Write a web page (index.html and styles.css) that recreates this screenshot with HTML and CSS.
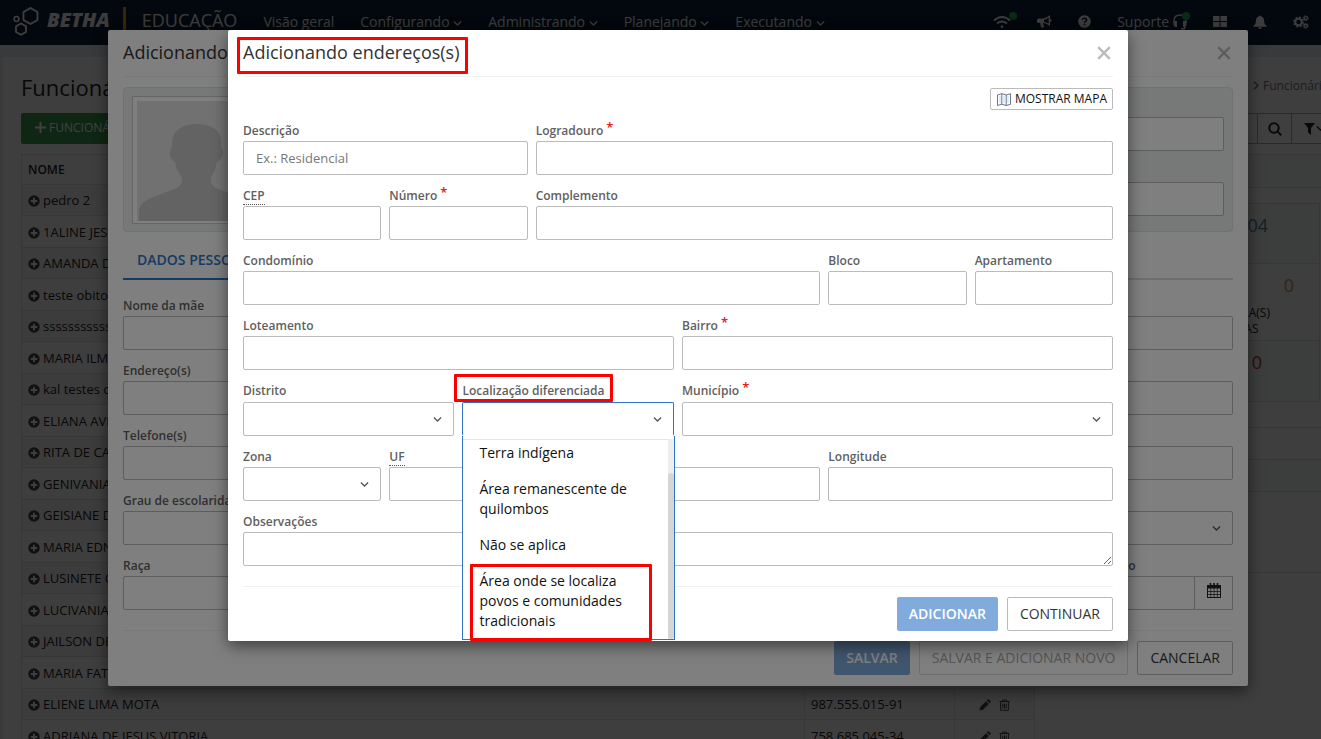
FILE: index.html
```html
<!DOCTYPE html>
<html lang="pt-BR">
<head>
<meta charset="utf-8">
<title>Betha Educação - Funcionários</title>
<link rel="stylesheet" href="styles.css">
</head>
<body>
<svg class="sprite" aria-hidden="true">
  <symbol id="i-chevron" viewBox="0 0 10 7"><path d="M1 1.2 5 5.2 9 1.2" fill="none" stroke="currentColor" stroke-width="1.4"/></symbol>
  <symbol id="i-plus-circle" viewBox="0 0 12 12"><circle cx="6" cy="6" r="5.7" fill="currentColor"/><path d="M6 2.8v6.4M2.8 6h6.4" stroke="#fff" stroke-width="1.8"/></symbol>
  <symbol id="i-pencil" viewBox="0 0 12 12"><path d="M.5 11.5 1.3 8 7 2.2l2.8 2.8L4 10.7zM7.8 1.4 8.7.5q.6-.5 1.2 0l1.6 1.6q.5.6 0 1.2l-.9.9z" fill="currentColor"/></symbol>
  <symbol id="i-trash" viewBox="0 0 11 12"><path d="M.5 2.5h10M3.5 2.5V1h4v1.5M1.6 2.7v8.6h7.8V2.7M3.8 4.5v5M5.5 4.5v5M7.2 4.5v5" fill="none" stroke="currentColor"/></symbol>
  <symbol id="i-close" viewBox="0 0 14 14"><path d="M1.2 1.2 12.8 12.8M12.8 1.2 1.2 12.8" stroke="currentColor" stroke-width="2.4"/></symbol>
</svg>
<div class="stage">
  <header class="navbar">
    <a class="brand" href="#">
      <svg width="26" height="29" viewBox="0 0 26 29" fill="none" stroke="#fff" stroke-width="1.8"><path d="M17.500 1l7 4v8l-7 4-7-4V5zM8 16.500l5 2.800v5.700l-5 2.800-5-2.800v-5.700z"/><circle cx="3.500" cy="12" r="2.400" stroke-width="1.500"/></svg>
      <span class="brand-name">BETHA</span>
    </a>
    <span class="brand-product">EDUCAÇÃO</span>
    <nav class="menu">
      <a href="#">Visão geral</a>
      <a href="#">Configurando <svg width="9" height="7"><use href="#i-chevron"/></svg></a>
      <a href="#">Administrando <svg width="9" height="7"><use href="#i-chevron"/></svg></a>
      <a href="#">Planejando <svg width="9" height="7"><use href="#i-chevron"/></svg></a>
      <a href="#">Executando <svg width="9" height="7"><use href="#i-chevron"/></svg></a>
    </nav>
    <div class="tools">
      <a class="tool has-dot" href="#" aria-label="Conexão"><svg width="18" height="14" viewBox="0 0 18 14" fill="none" stroke="currentColor" stroke-width="1.800"><path d="M1 5.500Q9-1.500 17 5.500M4 8.500q5-4 10 0"/><circle cx="9" cy="11.700" r="1.400" fill="currentColor" stroke="none"/></svg></a>
      <a class="tool" href="#" aria-label="Novidades"><svg width="15" height="14" viewBox="0 0 15 14"><path d="M0 5q0-1.500 1.500-1.500H6Q10 3 13 0v4q1.500.3 1.500 1.600T13 7.200v4Q10 8.300 6.500 8q-1 1 .3 2l-.2.800q.3.800 1 1.200-2 1.400-3.500.2Q3 9.500 3.300 8H1.500Q0 8 0 6.500zm7-.3v2.200q2.500.3 4.700 1.700V2.700Q9.500 4.300 7 4.700z" fill="currentColor" fill-rule="evenodd"/></svg></a>
      <a class="tool" href="#" aria-label="Ajuda"><svg width="13" height="13" viewBox="0 0 13 13"><circle cx="6.500" cy="6.500" r="6.300" fill="currentColor"/><path d="M4.300 5Q4.500 3.200 6.500 3.200T8.600 5Q8.600 6 7.300 6.500q-.8.400-.8 1.300M6.500 8.800v1.500" fill="none" stroke="#0a2038" stroke-width="1.600"/></svg></a>
      <a class="tool has-dot" href="#">Suporte <svg width="14" height="16" viewBox="0 0 14 16"><path d="M1 9V6.500Q1.300 1 7 1t6 5.500V9" fill="none" stroke="currentColor" stroke-width="1.300"/><path d="M1 7h3v6H2.500Q.5 12.500.5 10zM13 7h-3v6h1v1H8v1.500h3q1.500 0 1.500-2.500 1-1 1-3z" fill="currentColor"/></svg></a>
      <a class="tool" href="#" aria-label="Aplicativos"><svg width="14" height="11" viewBox="0 0 14 11"><path d="M0 0h6.500v5H0zM7.500 0H14v5H7.500zM0 6h6.500v5H0zM7.500 6H14v5H7.500z" fill="currentColor"/></svg></a>
      <a class="tool" href="#" aria-label="Notificações"><svg width="14" height="14" viewBox="0 0 14 14"><path d="M6.200 1.200a.8.800 0 0 1 1.600 0Q11 2 11 5.500q0 4 2.700 5.500v.8H.3V11Q3 9.500 3 5.500 3 2 6.200 1.200zM5.300 12.300h3.400Q8.500 14 7 14t-1.700-1.700z" fill="currentColor"/></svg></a>
      <a class="tool" href="#" aria-label="Configurações"><svg width="16" height="14" viewBox="0 0 16 14" fill="none" stroke="currentColor"><circle cx="5.500" cy="7" r="3.300" stroke-width="2.200"/><circle cx="5.500" cy="7" r="4.800" stroke-width="1.300" stroke-dasharray="2 1.770"/><circle cx="12.700" cy="3.200" r="1.600" stroke-width="1.400"/><circle cx="12.700" cy="3.200" r="2.600" stroke-dasharray="1.300 1.400"/><circle cx="12.700" cy="10.800" r="1.600" stroke-width="1.400"/><circle cx="12.700" cy="10.800" r="2.600" stroke-dasharray="1.300 1.400"/></svg></a>
    </div>
  </header>

  <main class="page">
    <div class="page-head">
      <h1>Funcionários</h1>
      <div class="crumb"><svg width="6" height="9" viewBox="0 0 6 9"><path d="M1 .8 4.800 4.500 1 8.200" fill="none" stroke="currentColor" stroke-width="1.600"/></svg>Funcionários</div>
    </div>
    <div class="toolbar">
      <button class="btn-new" type="button"><svg width="11" height="11" viewBox="0 0 11 11"><path d="M5.500 0v11M0 5.500h11" stroke="currentColor" stroke-width="2"/></svg>FUNCIONÁRIO</button>
      <div class="search">
        <input type="text" aria-label="Pesquisar">
        <button type="button" aria-label="Buscar"><svg width="14" height="14" viewBox="0 0 14 14" fill="none" stroke="currentColor" stroke-width="2"><circle cx="6" cy="6" r="4.700"/><path d="m9.400 9.400 3.800 3.800"/></svg></button>
        <button class="filter" type="button" aria-label="Filtrar"><svg width="11" height="12" viewBox="0 0 11 12"><path d="M0 0h11L7 5v7L4 9.500V5z" fill="currentColor"/></svg><svg width="9" height="7"><use href="#i-chevron"/></svg></button>
      </div>
    </div>
    <div class="columns">
      <table class="people">
        <thead><tr><th>NOME</th><th class="cpf"></th><th class="acts"></th></tr></thead>
        <tbody id="people"></tbody>
      </table>
      <aside class="side">
        <div class="side-head"></div>
        <div class="stats">
          <div class="stat stat-a"><b class="blue">04</b></div>
          <div class="stat stat-b"><b class="gold">0</b><span>MATRÍCULA(S)<br>VENCIDAS</span></div>
          <div class="stat stat-c"><b class="red">0</b></div>
        </div>
        <div class="line line-a"></div><div class="line line-b"></div><div class="line line-c"></div><div class="line line-d"></div>
      </aside>
    </div>
  </main>

  <div class="overlay">
    <section class="modal modal-lg">
      <div class="modal-head"><h2>Adicionando funcionário</h2><button class="close" type="button" aria-label="Fechar"><svg width="14" height="14"><use href="#i-close"/></svg></button></div>
      <div class="profile">
        <div class="photo"><svg width="120" height="120" viewBox="0 0 120 120"><path d="M0 0h120v120H0z" fill="#e2e2e2"/><path d="M2 120V110Q3 101 14 97L40 87Q46 84 45 76 40 71 38 61 32 58 33 50L35 46Q33 24 60 23 87 24 84 46L86 50Q86 58 80 61 78 71 74 76 73 84 79 87L105 97Q116 101 117 110V120z" fill="#c6c6c6"/></svg></div>
        <div class="profile-fields"><input type="text" aria-label="Nome"><input type="text" aria-label="CPF"></div>
      </div>
      <div class="tabs"><button type="button">DADOS PESSOAIS</button></div>
      <div class="rows">
        <div class="field"><label for="mae">Nome da mãe</label><input id="mae" type="text"></div>
        <div class="field"><label for="ends">Endereço(s)</label><input id="ends" type="text"></div>
        <div class="field"><label for="tels">Telefone(s)</label><input id="tels" type="text"></div>
        <div class="field"><label for="grau">Grau de escolaridade</label><select id="grau"><option></option></select><svg class="caret" width="9" height="7"><use href="#i-chevron"/></svg></div>
        <div class="pair">
          <div class="field"><label for="raca">Raça</label><input id="raca" type="text"></div>
          <div class="field date-field"><label for="adm">Admissão</label><div class="date"><input id="adm" type="text"><button type="button" aria-label="Calendário"><svg width="14" height="15" viewBox="0 0 14 15"><path d="M0 2h14v13H0zM1 5.500V8h2.500V5.500zm3.200 0V8h2.500V5.500zm3.200 0V8h2.500V5.500zm3.200 0V8H13V5.500zM1 8.700v2.300h2.500V8.700zm3.200 0v2.300h2.500V8.700zm3.200 0v2.300h2.500V8.700zm3.200 0v2.300H13V8.700zM1 11.700V14h2.500v-2.300zm3.200 0V14h2.500v-2.300zm3.200 0V14h2.500v-2.300zm3.200 0V14H13v-2.300z" fill="currentColor" fill-rule="evenodd"/><path d="M3.500 0v3M7 0v3M10.500 0v3" stroke="currentColor" stroke-width="1.600"/></svg></button></div></div>
        </div>
      </div>
      <div class="modal-foot"><button class="btn primary" type="button" disabled>SALVAR</button><button class="btn muted" type="button" disabled>SALVAR E ADICIONAR NOVO</button><button class="btn" type="button">CANCELAR</button></div>
    </section>
  </div>

  <div class="overlay">
    <section class="modal modal-md">
      <div class="modal-head"><h2>Adicionando endereços(s)</h2><button class="close" type="button" aria-label="Fechar"><svg width="14" height="14"><use href="#i-close"/></svg></button></div>
      <div class="mark mark-title"></div>
      <div class="map-row"><button class="btn-map" type="button"><svg width="14" height="13" viewBox="0 0 14 13"><path d="M3 3v7M7 3v7M11 3v7" stroke="#b5dcf5"/><path d="M.500 2 4.800.700l4.400 1.300L13.500.700v10.600L9.200 12.500l-4.400-1.300L.500 12.500zM4.800.700v10.500M9.200 2v10.500" fill="none" stroke="#4a5268" stroke-width=".800"/></svg>MOSTRAR MAPA</button></div>
      <form class="grid">
        <div class="field c4"><label for="desc">Descrição</label><input id="desc" type="text" placeholder="Ex.: Residencial"></div>
        <div class="field c8"><label for="logr">Logradouro <sup>*</sup></label><input id="logr" type="text"></div>
        <div class="field c2"><label for="cep"><abbr>CEP</abbr></label><input id="cep" type="text"></div>
        <div class="field c2"><label for="num">Número <sup>*</sup></label><input id="num" type="text"></div>
        <div class="field c8"><label for="comp">Complemento</label><input id="comp" type="text"></div>
        <div class="field c8"><label for="cond">Condomínio</label><input id="cond" type="text"></div>
        <div class="field c2"><label for="bloco">Bloco</label><input id="bloco" type="text"></div>
        <div class="field c2"><label for="apto">Apartamento</label><input id="apto" type="text"></div>
        <div class="field c6"><label for="lote">Loteamento</label><input id="lote" type="text"></div>
        <div class="field c6"><label for="bairro">Bairro <sup>*</sup></label><input id="bairro" type="text"></div>
        <div class="field combo c3"><label for="dist">Distrito</label><select id="dist"><option></option></select><svg class="caret" width="9" height="7"><use href="#i-chevron"/></svg></div>
        <div class="field combo c3 open"><label for="loc">Localização diferenciada</label><select id="loc"><option></option></select><svg class="caret" width="9" height="7"><use href="#i-chevron"/></svg>
          <div class="mark mark-label"></div>
          <div class="dropdown"><ul>
            <li>Terra indígena</li><li>Área remanescente de quilombos</li><li>Não se aplica</li><li>Área onde se localiza povos e comunidades tradicionais</li>
          </ul><div class="scrollbar"><div class="thumb"></div></div><div class="mark mark-option"></div></div>
        </div>
        <div class="field combo c6"><label for="mun">Município <sup>*</sup></label><select id="mun"><option></option></select><svg class="caret" width="9" height="7"><use href="#i-chevron"/></svg></div>
        <div class="field c2"><label for="zona">Zona</label><select id="zona"><option></option></select><svg class="caret" width="9" height="7"><use href="#i-chevron"/></svg></div>
        <div class="field c2"><label for="uf"><abbr>UF</abbr></label><input id="uf" type="text"></div>
        <div class="field c4 bottom"><input type="text" aria-label="Latitude"></div>
        <div class="field c4"><label for="lon">Longitude</label><input id="lon" type="text"></div>
        <div class="field c12"><label for="obs">Observações</label><textarea id="obs" rows="1"></textarea></div>
      </form>
      <div class="modal-foot"><button class="btn primary" type="button" disabled>ADICIONAR</button><button class="btn" type="button">CONTINUAR</button></div>
    </section>
  </div>
</div>
<script src="people.js"></script>
</body>
</html>
```

FILE: styles.css
```css
* { box-sizing: border-box; }
body { margin: 0; height: 100vh; overflow: hidden; font: 13px/20px "Open Sans", "Noto Sans", sans-serif; color: #222; background: #e4e9ee; }
.sprite { position: absolute; width: 0; height: 0; }
.stage { position: relative; width: calc(100% + 35px); height: 100vh; overflow: hidden; }
a { color: inherit; text-decoration: none; }
h1, h2 { margin: 0; font-weight: 400; }
button, input, select, textarea { font: inherit; color: inherit; margin: 0; }

.navbar { display: flex; align-items: center; height: 45px; padding: 0 47px 2px 13px; background: #0a2038; color: #f0f0f0; font-size: 14px; }
.brand { display: flex; align-items: center; gap: 8px; height: 23px; padding-right: 13px; border-right: 3px solid #e09a10; margin: 0 16px 7px 0; }
.brand svg { margin-top: 6px; }
.brand-name { font-size: 20px; font-weight: 800; font-style: italic; margin-top: 4px; }
.brand-product { font-size: 18px; margin-bottom: 3px; }
.menu { display: flex; gap: 26px; margin-left: 26px; }
.tools { display: flex; align-items: center; gap: 26px; margin-left: auto; }
.tool { display: flex; align-items: center; gap: 4px; position: relative; }
.has-dot::after { content: ""; position: absolute; right: -6px; top: -3px; width: 8px; height: 8px; border-radius: 50%; background: #24a84c; }
.tool:nth-child(4)::after { right: -3px; top: 0; }

.page { margin: 12px 0 0 3px; padding: 15px 19px 0 18px; background: #fafafa; height: 100%; }
.page-head { display: flex; justify-content: space-between; align-items: center; height: 30px; }
.page-head h1 { font-size: 22px; line-height: 30px; }
.crumb { display: flex; align-items: center; gap: 4px; color: #777; font-size: 12px; width: 84px; padding-bottom: 3px; }
.toolbar { display: flex; justify-content: space-between; margin: 11px 0 10px; height: 31px; }
.btn-new { display: flex; align-items: center; gap: 3px; padding: 0 14px 2px; border: 0; border-radius: 2px; background: #3d9a50; color: #fff; font-size: 12px; }
.search { display: flex; width: 300px; }
.search input { flex: 1; min-width: 0; height: 31px; border: 1px solid #aaa; background: #fff; }
.search button { width: 35px; margin-left: -1px; padding: 0; border: 1px solid #aaa; background: #fff; display: flex; align-items: center; justify-content: center; }
.search .filter { width: 46px; gap: 1px; }
.columns { display: grid; grid-template-columns: minmax(0, 1fr) 284px; gap: 18px; }
.people { width: 100%; border-collapse: collapse; table-layout: fixed; align-self: start; }
.people th { height: 30px; padding: 0 6px; text-align: left; font-size: 12px; font-weight: 600; border: 1px solid #ddd; background: #fafafa; }
.people td { height: 31px; padding: 0 6px; border: 1px solid #ddd; white-space: nowrap; line-height: 18px; }
.people tr:nth-child(even) td { height: 32px; background: #fafafa; }
.people tbody tr:nth-child(odd) td { background: #f0f1f2; }
.people .cpf { width: 150px; }
.people .acts { width: 80px; }
.people td svg { vertical-align: -2px; margin-right: 3px; color: #444; }
.people td.acts { text-align: center; }
.people td.acts svg { margin: 0 4px; }
.side-head { height: 34px; border: 1px solid #ddd; background: #f3f4f4; }
.stats { margin: 15px 0 25px; border: 1px solid #ddd; border-bottom: 0; background: #f3f4f4; }
.side { padding-right: 0; }
.stats { margin-right: 17px; }
.stat { border-bottom: 1px solid #ddd; padding: 9px 51px 0 0; text-align: right; font-size: 12px; line-height: 16px; }
.stat b { display: block; font-size: 18px; line-height: 24px; font-weight: 400; }
.stat span { display: inline-block; padding: 8px 0; text-align: center; margin-right: -2px; }
.stat-a { height: 60px; }
.stat-b { height: 77px; background: #fafafa; }
.stat-b b { margin-right: -26px; }
.stat-c { height: 61px; padding-right: 57px; }
.blue { color: #3f86a4; } .gold { color: #cf9a4c; } .red { color: #b93434; }
.line { border-top: 1px solid #ddd; }
.line-a, .line-b { height: 32px; }
.line-b { background: #f3f4f4; }
.line-c { height: 81px; }

.overlay { position: absolute; inset: 0; display: flex; align-items: flex-start; justify-content: center; padding-top: 30px; background: rgba(0, 0, 0, .5); }
.modal { padding: 0 15px 10px; background: #fff; border-radius: 2px; box-shadow: 0 5px 15px rgba(0, 0, 0, .5); position: relative; }
.modal-lg { width: 1140px; padding-bottom: 11px; }
.modal-md { width: 900px; }
.modal-head { display: flex; justify-content: space-between; align-items: center; height: 47px; border-bottom: 1px solid #f2f2f2; }
.modal-head h2 { font-size: 18px; line-height: 24px; color: #333; margin-bottom: 2px; }
.close { padding: 0; width: 18px; height: 18px; border: 0; background: none; color: #bbb; display: flex; align-items: center; justify-content: center; }
.profile { display: flex; gap: 20px; margin-top: 10px; padding: 8px; height: 145px; border: 1px solid #dfe5e4; border-radius: 4px; background: #edf2f1; }
.photo { width: 130px; height: 128px; padding: 4px; border: 1px solid #ccc; background: #fff; }
.photo svg { display: block; }
.profile-fields { flex: 1; display: flex; flex-direction: column; gap: 31px; padding-top: 21px; }
input, select, textarea { display: block; width: 100%; height: 34px; border: 1px solid #bbb; border-radius: 2px; background: #fff; padding: 0 12px; }
input::placeholder { color: #777; }
.tabs { display: flex; height: 47px; margin-top: 1px; border-bottom: 2px solid #ddd; }
.tabs button { border: 0; border-bottom: 2px solid #2d74c4; margin: 0 0 -2px; padding: 8px 14px 0; background: none; color: #2d74c4; font-size: 14px; font-weight: 600; }
.rows { display: grid; gap: 11px; padding: 16px 0 20px; }
.pair { display: grid; grid-template-columns: minmax(0, 3fr) minmax(0, 1fr); gap: 8px; }
.date { display: flex; }
.date button { width: 39px; margin-left: -1px; padding: 0; border: 1px solid #bbb; background: #fff; flex: none; }
.date-field label { width: 178px; text-align: right; }
.field { position: relative; }
.field label { display: block; font-size: 12px; line-height: 20px; font-weight: 600; color: #606060; height: 20px; }
.field.bottom { align-self: end; }
.combo label { margin-bottom: 1px; }
.field sup { color: #e02020; font-size: 13px; line-height: 0; vertical-align: 3px; }
.field abbr { display: inline-block; line-height: 17px; border-bottom: 1px dotted #555; }
select { appearance: none; }
.caret { position: absolute; right: 12px; bottom: 13px; color: #555; pointer-events: none; }
.modal-foot { display: flex; justify-content: flex-end; gap: 9px; padding-top: 10px; border-top: 1px solid #f2f2f2; }
.btn { height: 34px; padding: 0 12px; border: 1px solid #bbb; border-radius: 2px; background: #fff; font-size: 14px; color: #333; }
.btn.primary { padding: 0 11px; background: #80abdc; border-color: #80abdc; color: #fff; font-weight: 600; }
.btn.muted { color: #aaa; border-color: #ddd; }
.map-row { display: flex; justify-content: flex-end; padding: 11px 0; }
.btn-map { display: flex; align-items: center; gap: 4px; height: 22px; padding: 0 5px 0 6px; border: 1px solid #bbb; border-radius: 2px; background: #fff; font-size: 12px; color: #111; }
.grid { display: grid; grid-template-columns: repeat(12, minmax(0, 1fr)); gap: 11px 8px; padding-bottom: 20px; }
.c2 { grid-column: span 2; } .c3 { grid-column: span 3; } .c4 { grid-column: span 4; } .c6 { grid-column: span 6; } .c8 { grid-column: span 8; } .c12 { grid-column: span 12; }
textarea { resize: vertical; }
.open select { border-color: #2d74c4; border-bottom-color: #fff; }
.dropdown { position: absolute; z-index: 2; left: 0; right: -1px; top: 100%; padding-top: 3px; display: flex; border: 1px solid #2d74c4; border-top: 0; background: #fff; font-size: 14px; color: #111; }
.dropdown ul { flex: 1; margin: 0; padding: 0; list-style: none; border-top: 1px solid #e5e5e5; }
.dropdown li { padding: 8px 16px; }
.dropdown li:first-child { padding-top: 3px; }
.scrollbar { width: 6px; background: #eee; padding-top: 34px; display: flex; }
.thumb { width: 6px; border-radius: 3px; background: #d5d5d5; }
.mark { position: absolute; border: 3px solid #f00; border-radius: 1px; pointer-events: none; z-index: 3; }
.mark-title { left: 9px; top: 7px; width: 231px; height: 37px; }
.mark-label { left: -8px; top: -7px; width: 159px; height: 28px; }
.mark-option { left: 7px; right: 22px; bottom: -2px; height: 77px; }
```

FILE: people.js
```js
const people = [
  ["pedro 2"], ["1ALINE JESUS"], ["AMANDA DIAS"], ["teste obito"], ["ssssssssssss"],
  ["MARIA ILMA"], ["kal testes cad"], ["ELIANA AVILA"], ["RITA DE CASSIA"],
  ["GENIVANIA"], ["GEISIANE DIAS"], ["MARIA EDNA"], ["LUSINETE COSTA"],
  ["LUCIVANIA"], ["JAILSON DE JESUS"], ["MARIA FATIMA"],
  ["ELIENE LIMA MOTA", "987.555.015-91"],
  ["ADRIANA DE JESUS VITORIA", "758.685.045-34"]
];
const icon = (id, w) => `<svg width="${w}" height="12"><use href="#${id}"/></svg>`;
document.getElementById("people").innerHTML = people.map(([name, cpf = ""]) =>
  `<tr><td>${icon("i-plus-circle", 12)}${name}</td><td>${cpf}</td><td class="acts">${icon("i-pencil", 12)}${icon("i-trash", 11)}</td></tr>`
).join("");
```
